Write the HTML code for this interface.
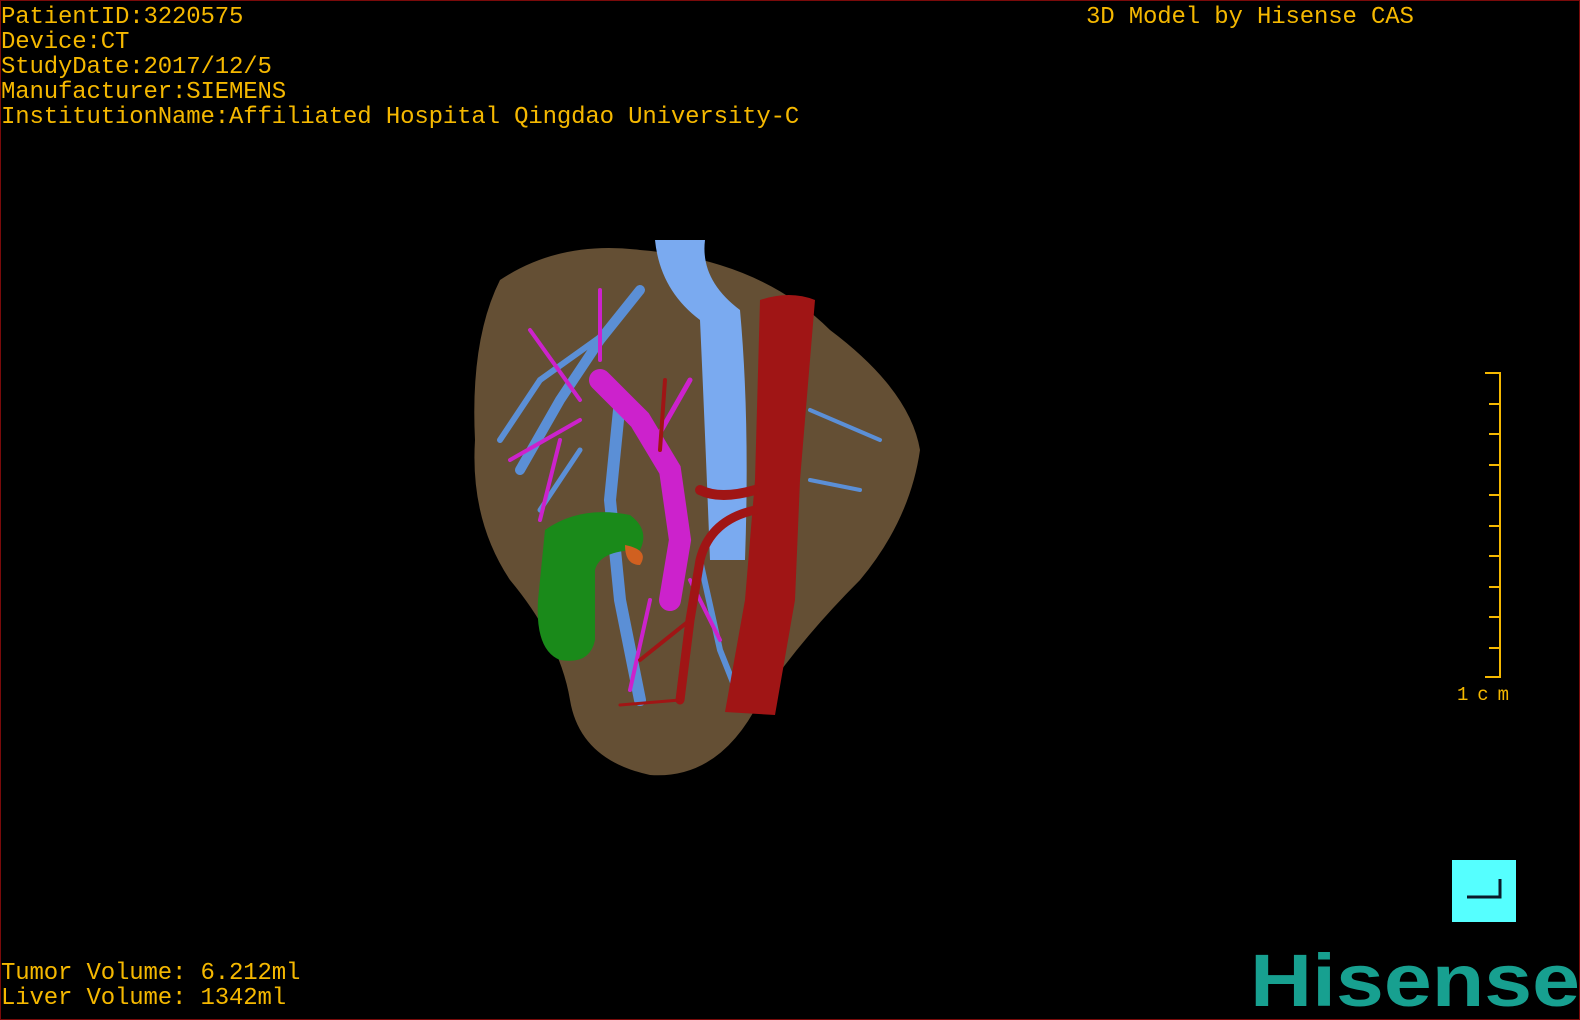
<!DOCTYPE html>
<html><head><meta charset="utf-8"><style>
body{margin:0;width:1580px;height:1020px;background:#000;overflow:hidden;position:relative;font-family:"Liberation Mono",monospace;}
.frame{position:absolute;left:0;top:0;width:1578px;height:1018px;border:1px solid #7a0a0a;}
.t{position:absolute;color:#f5b800;font-size:24px;line-height:25px;white-space:pre;letter-spacing:-0.15px;}
</style></head><body>
<div class="frame"></div>
<div class="t" style="left:1px;top:5px">PatientID:3220575
Device:CT
StudyDate:2017/12/5
Manufacturer:SIEMENS
InstitutionName:Affiliated Hospital Qingdao University-C</div>
<div class="t" style="left:1086px;top:5px">3D Model by Hisense CAS</div>
<div class="t" style="left:1px;top:961px">Tumor Volume: 6.212ml
Liver Volume: 1342ml</div>
<svg width="1580" height="1020" style="position:absolute;left:0;top:0">
<path d="M500 280 Q560 240 640 250 Q760 260 830 330 Q910 390 920 450 Q910 520 860 580 Q800 640 760 700 Q720 780 650 775 Q580 760 570 700 Q560 640 510 580 Q470 520 475 440 Q470 340 500 280Z" fill="#644f34"/>
<g stroke="#5b8fd6" stroke-linecap="round" fill="none">
<path d="M640 290 L600 340 L560 400 L520 470" stroke-width="10"/>
<path d="M610 330 L540 380 L500 440" stroke-width="6"/>
<path d="M620 400 L610 500 L620 600 L640 700" stroke-width="12"/>
<path d="M700 560 L720 650 L740 700" stroke-width="6"/>
<path d="M810 410 L880 440" stroke-width="4"/>
<path d="M810 480 L860 490" stroke-width="4"/>
<path d="M580 450 L540 510" stroke-width="5"/>
</g>
<path d="M655 240 L705 240 Q700 280 740 310 Q750 420 745 560 L710 560 Q705 430 700 320 Q660 290 655 240Z" fill="#7aaaf0"/>
<g stroke="#cc22cc" stroke-linecap="round" fill="none">
<path d="M600 380 L640 420 L670 470 L680 540 L670 600" stroke-width="22"/>
<path d="M580 400 L530 330" stroke-width="4"/>
<path d="M580 420 L510 460" stroke-width="4"/>
<path d="M600 360 L600 290" stroke-width="4"/>
<path d="M650 450 L690 380" stroke-width="5"/>
<path d="M650 600 L630 690" stroke-width="4"/>
<path d="M690 580 L720 640" stroke-width="4"/>
<path d="M560 440 L540 520" stroke-width="4"/>
</g>
<path d="M545 530 Q580 505 630 515 Q650 530 640 550 Q600 550 595 570 L595 640 Q590 665 560 660 Q535 650 538 600 Z" fill="#1a8a1a"/>
<path d="M625 545 Q650 550 640 565 Q625 565 625 545Z" fill="#d06020"/>
<path d="M760 300 Q790 290 815 300 L800 480 L795 600 L775 715 L725 712 L745 600 L755 480 Z" fill="#a01515"/>
<g stroke="#a01515" stroke-linecap="round" fill="none">
<path d="M755 490 Q720 500 700 490" stroke-width="10"/>
<path d="M755 510 Q710 520 700 560 L690 620 L680 700" stroke-width="9"/>
<path d="M690 620 L640 660" stroke-width="4"/>
<path d="M680 700 L620 705" stroke-width="3"/>
<path d="M660 450 L665 380" stroke-width="4"/>
</g>
<g stroke="#f5b800" stroke-width="2" fill="none">
<path d="M1500 372 V678"/>
<path d="M1485 373 H1500 M1489 404 H1500 M1489 434 H1500 M1489 465 H1500 M1489 495 H1500 M1489 526 H1500 M1489 556 H1500 M1489 587 H1500 M1489 617 H1500 M1489 648 H1500 M1485 677 H1500"/>
</g>
<text x="1457" y="700" fill="#f5b800" font-family="Liberation Mono" font-size="19" textLength="52">1cm</text>
<rect x="1452" y="860" width="64" height="62" fill="#55ffff"/>
<path d="M1500 879 V897 H1467" stroke="#0a1a2a" stroke-width="3" fill="none"/>
<text x="1250" y="1006" fill="#17a090" font-family="Liberation Sans" font-weight="bold" font-size="74" textLength="330" lengthAdjust="spacingAndGlyphs">Hisense</text>
</svg>
</body></html>
